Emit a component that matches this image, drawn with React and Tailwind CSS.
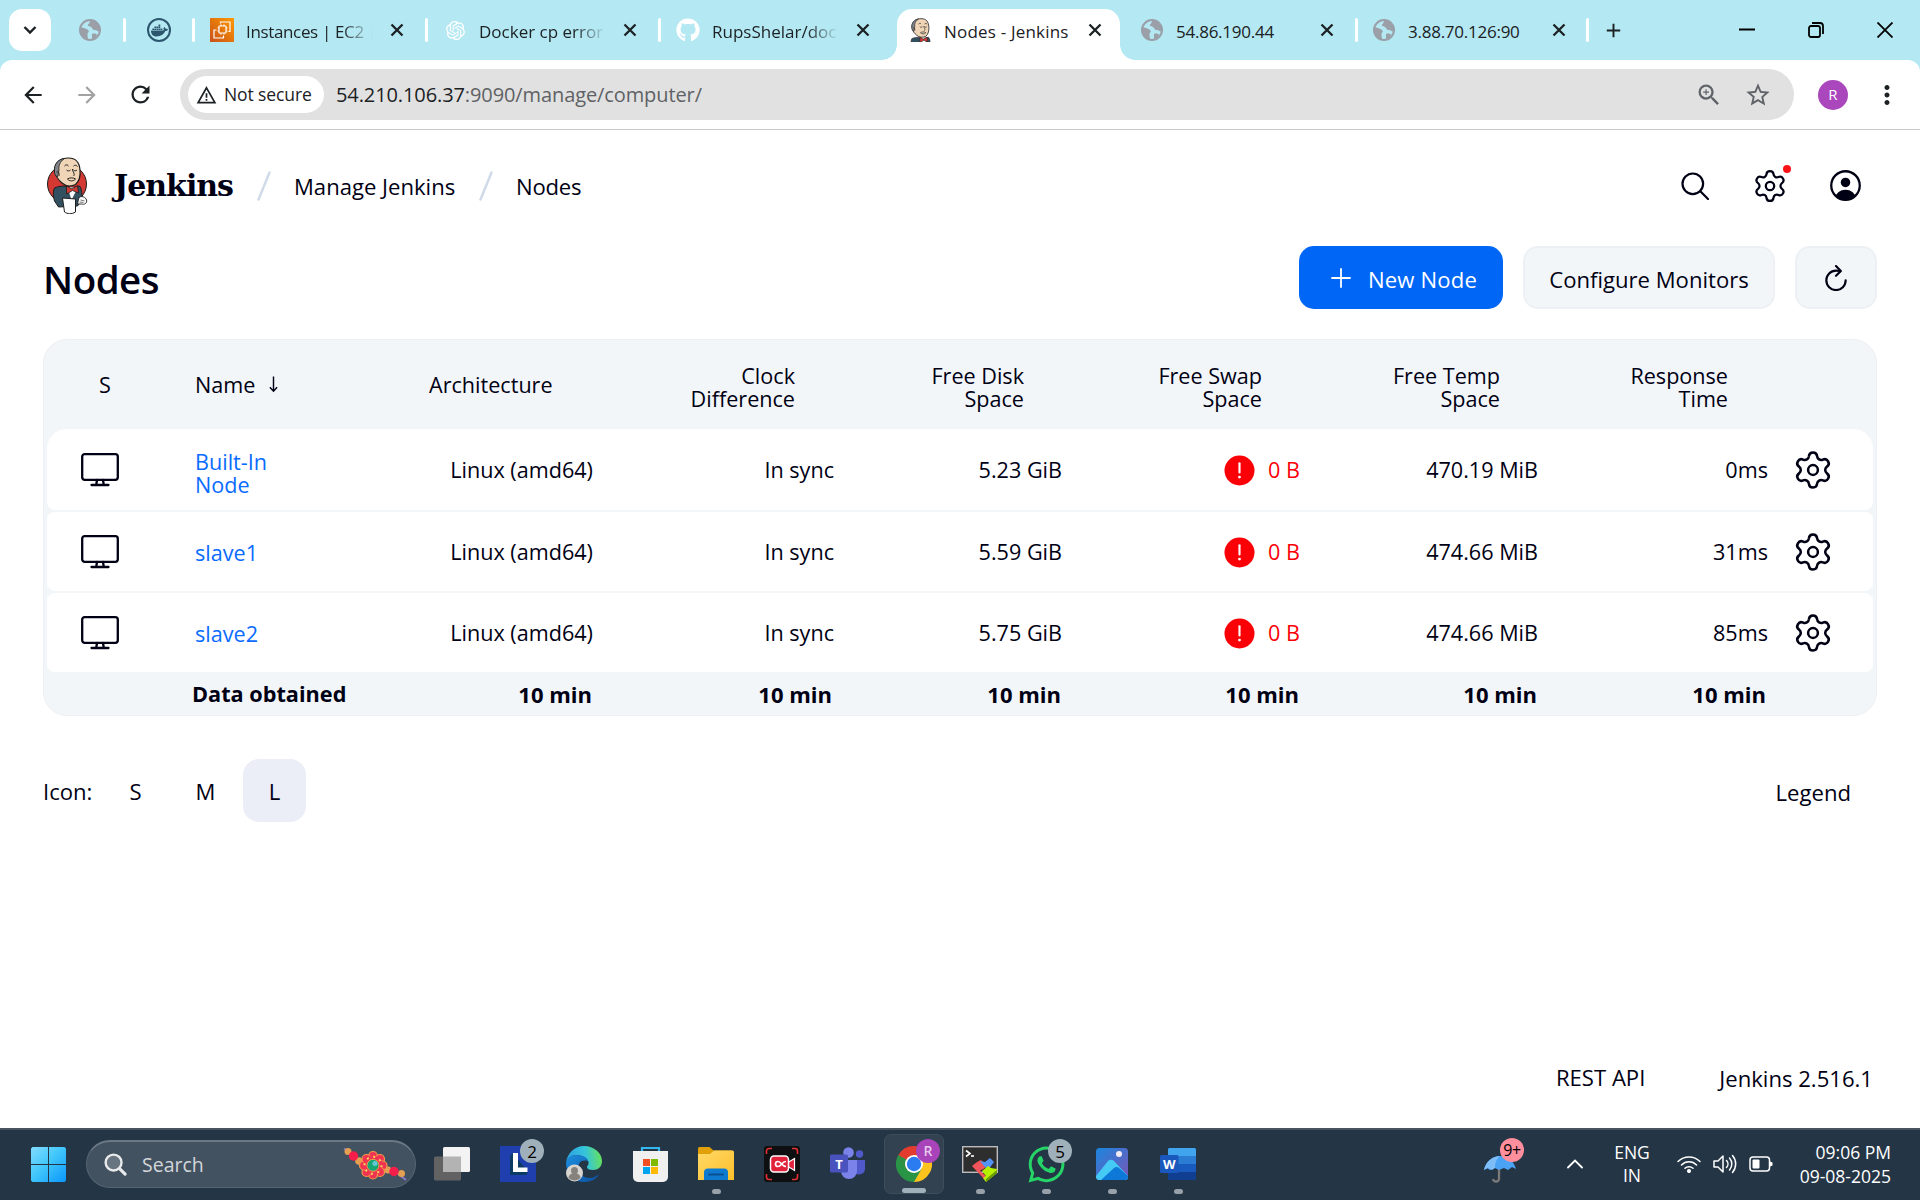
import React from "react";
import { MdArrowBack, MdArrowForward, MdRefresh, MdAdd, MdStarBorder, MdMoreVert, MdZoomIn } from "react-icons/md";
import { FaDocker, FaGithub, FaWhatsapp } from "react-icons/fa";
import { RiOpenaiFill } from "react-icons/ri";

/* ---------- Icons ---------- */

function Globe() {
  return (
    <svg viewBox="0 0 22 22" className="size-[22px]">
      <circle cx="11" cy="11" r="10" fill="#b4e8f2" stroke="#9a9fa8" strokeWidth="2" />
      <path d="M1.5 8 C5 9 8 9.500 9.500 11.500 C10.500 13 8 14 8.500 16 L9 21 C4 20 1 16 1 11 Z" fill="#9a9fa8" />
      <path d="M12 1 C10 3 11 4 9 5.500 C8 7 11 7 12 8 C14 9.500 13 11 16 11 C18 11 18.500 13 20.500 12.500 C21.500 6 17 1.500 12 1Z" fill="#9a9fa8" />
      <path d="M13 15 c2 -1 5 0 5 1 c-1 2 -3 3.500 -5 4 z" fill="#9a9fa8" />
    </svg>
  );
}

function CloseMark({ className }) {
  return (
    <svg viewBox="0 0 20 20" className={className}>
      <path d="M4.500 4.500l11 11M15.500 4.500l-11 11" stroke="#1c2124" strokeWidth="2.300" />
    </svg>
  );
}

function DockerBadge() {
  return (
    <span className="flex size-6 items-center justify-center rounded-full border-2 border-[#2c566e]">
      <FaDocker className="size-[17px] text-[#2c566e]" />
    </span>
  );
}

function Ec2() {
  return (
    <svg viewBox="0 0 24 24" className="size-6">
      <defs>
        <linearGradient id="ec2" x1="0" y1="1" x2="1" y2="0">
          <stop offset="0" stopColor="#c8511b" />
          <stop offset="1" stopColor="#ff9900" />
        </linearGradient>
      </defs>
      <rect width="24" height="24" fill="url(#ec2)" />
      <g fill="none" stroke="#fff" strokeWidth="1.200">
        <rect x="9" y="8" width="7" height="7" rx="0.500" />
        <path d="M11 6.500v1.500M14 6.500v1.500M11 15v1.500M14 15v1.500M7.500 10h1.500M7.500 13h1.500M16 10h1.500M16 13h1.500" />
        <path d="M10.500 5.500V4H20v9.500h-1.500M6.500 12H4v8h9.500v-2.500" />
      </g>
    </svg>
  );
}

function Butler({ className, viewBox = "0 0 41 57", portrait }) {
  return (
    <svg viewBox={viewBox} className={className}>
      {!portrait && <ellipse cx="20.500" cy="27" rx="19.500" ry="19" fill="#d33833" stroke="#1d1d1d" strokeWidth="1" />}
      <path d="M8 31 C13 29 18 28 24 31 L33 29 C36 32 35 39 36 42 L31 49 L12 50 L8 44 C7 40 6 35 8 31Z" fill="#335061" stroke="#1d1d1d" strokeWidth="1" />
      <path d="M21 30 L25 43 L31 31Z" fill="#fff" />
      <path d="M8 14 C8 5 14 1 22 1 C30 1 33 6 33.500 13 C34 18 33 24 29 27.500 C24 30 19 29 15.500 26 C12 23 9 20 8 14Z" fill="#f0d6b7" stroke="#1d1d1d" strokeWidth="1.200" />
      <path d="M8 15 C7 6 13 2 18 1.500 C13 5 12 9 12.500 13 L11 20 C9 19 8 17 8 15Z" fill="#81858a" stroke="#1d1d1d" strokeWidth="0.800" />
      <path d="M10 15c2-1 3 1 2.500 4" fill="none" stroke="#1d1d1d" strokeWidth="0.900" />
      <path d="M18 9c1-1.500 3-1.500 4 0M27 9c1-1 3-1 4 .5M20 13c1 1.200 3 1.200 4 0M27 13c1 1 2.500 1 3.500 0M26 12c0 3 3 5 1 7M21 22c2-1.500 6-1.500 8 0-2 2.500-6 2.500-8 0Z" fill="none" stroke="#1d1d1d" strokeWidth="1" />
      <path d="M20 29 L25.500 32 L31 28.500 L32 36 L26 33.500 L20 37Z" fill="#d33833" stroke="#1d1d1d" strokeWidth="0.800" />
      <path d="M16 41 L29 42 L29 55 C25 57.500 21 57 18 55Z" fill="#fff" stroke="#1d1d1d" strokeWidth="1" />
      <path d="M33 40 C36 39 39 40 40 43 C41 46 38 48 35 47 L31 47 L32 42Z" fill="#fff" stroke="#1d1d1d" strokeWidth="0.900" />
      <path d="M34 43l4 1M33 45l4 .5" stroke="#1d1d1d" strokeWidth="0.600" />
    </svg>
  );
}

function Gear({ className, weight = 1.45 }) {
  return (
    <svg viewBox="0 0 24 24" className={className} fill="none" stroke="#000014" strokeWidth={weight} strokeLinejoin="round">
      <path d="M9.671 4.136a2.340 2.340 0 0 1 4.659 0 2.340 2.340 0 0 0 3.319 1.915 2.340 2.340 0 0 1 2.330 4.033 2.340 2.340 0 0 0 0 3.831 2.340 2.340 0 0 1-2.330 4.033 2.340 2.340 0 0 0-3.319 1.915 2.340 2.340 0 0 1-4.659 0 2.340 2.340 0 0 0-3.320-1.915 2.340 2.340 0 0 1-2.330-4.033 2.340 2.340 0 0 0 0-3.831A2.340 2.340 0 0 1 6.350 6.051a2.340 2.340 0 0 0 3.319-1.915" />
      <circle cx="12" cy="12" r="2.800" />
    </svg>
  );
}

function Computer() {
  return (
    <svg viewBox="0 0 38 34" className="h-[34px] w-[38px]" fill="none" stroke="#000014" strokeWidth="2.300" strokeLinejoin="round" strokeLinecap="round">
      <rect x="1.200" y="1.200" width="35.600" height="25.600" rx="2.500" />
      <path d="M16 27l-.8 5M22 27l.8 5M10.500 32h17" />
    </svg>
  );
}

function Alert() {
  return (
    <svg viewBox="0 0 32 32" className="size-[31px]">
      <circle cx="16" cy="16" r="15.500" fill="#fb0007" />
      <path d="M16 8.500v9.500" stroke="#fff" strokeWidth="2.200" strokeLinecap="round" />
      <circle cx="16" cy="22.800" r="1.500" fill="#fff" />
    </svg>
  );
}

/* ---------- Browser chrome ---------- */

const Divider = () => <span className="h-6 w-[3px] shrink-0 rounded-full bg-white" />;

function Tab({ width, icon, label, text = "tracking-normal", fade, pad = "pl-[15px]" }) {
  return (
    <div className={`flex h-[51px] shrink-0 items-center ${width} ${pad}`}>
      <span className="flex size-6 shrink-0 items-center justify-center">{icon}</span>
      <span
        className={`mt-[3px] ml-3 w-[127px] shrink-0 overflow-hidden text-[17px] leading-6 whitespace-nowrap text-[#1c2124] ${text} ${
          fade ? "[mask-image:linear-gradient(to_right,black_75%,transparent)]" : ""
        }`}
      >
        {label}
      </span>
      <CloseMark className="ml-3.5 size-5" />
    </div>
  );
}

function TabStrip() {
  return (
    <div className="flex h-[60px] items-end bg-[#b4e8f2]">
      <div className="flex h-[51px] w-full items-start">
        <div className="ml-[9px] flex h-[42px] w-[42px] shrink-0 items-center justify-center rounded-[13px] bg-white">
          <svg viewBox="0 0 14 10" className="h-2.5 w-3.5"><path d="M1.500 2l5.500 5.500L12.500 2" fill="none" stroke="#1c2124" strokeWidth="2.400" /></svg>
        </div>
        <div className="flex h-[42px] items-center">
          <span className="flex w-[72px] justify-center pl-1.5"><Globe /></span>
          <Divider />
          <span className="flex w-[66px] justify-center"><DockerBadge /></span>
          <Divider />
          <Tab width="w-[230px]" icon={<Ec2 />} label="Instances | EC2 |" text="tracking-[-0.35px]" fade />
          <Divider />
          <Tab width="w-[230px]" icon={<RiOpenaiFill className="size-[23px] text-white" />} label="Docker cp error" fade />
          <Divider />
          <Tab width="w-[236px]" icon={<FaGithub className="size-6 text-white" />} label="RupsShelar/doc" fade />
        </div>
        <div className="relative flex h-[51px] w-[223px] shrink-0 items-start rounded-t-[15px] bg-white">
          <span className="absolute bottom-0 -left-[15px] size-[15px] bg-[radial-gradient(circle_at_0_0,transparent_14.5px,white_15px)]" />
          <span className="absolute -right-[15px] bottom-0 size-[15px] bg-[radial-gradient(circle_at_100%_0,transparent_14.5px,white_15px)]" />
          <div className="flex h-[42px] items-center">
            <Tab width="w-[223px]" pad="pl-[11px]" icon={<Butler className="h-6 w-[23px]" viewBox="6 0 30 36" portrait />} label="Nodes - Jenkins" text="tracking-[0.2px]" />
          </div>
        </div>
        <div className="flex h-[42px] items-center">
          <Tab width="w-[235px]" pad="pl-[20px]" icon={<Globe />} label="54.86.190.44" text="tracking-[-0.25px]" />
          <Divider />
          <Tab width="w-[228px]" pad="pl-3.5" icon={<Globe />} label="3.88.70.126:90" text="tracking-[-0.25px]" />
          <Divider />
          <MdAdd className="ml-[13px] size-[23px] text-[#1c2124]" />
        </div>
        <div className="ml-auto flex h-[42px] items-center pr-[27px] text-black">
          <svg viewBox="0 0 16 16" className="size-4"><path d="M0 7.500h16" stroke="currentColor" strokeWidth="2" /></svg>
          <svg viewBox="0 0 16 16" className="ml-[53px] size-4" fill="none" stroke="currentColor" strokeWidth="1.800">
            <rect x="1" y="4" width="11" height="11" rx="2" />
            <path d="M4 1h8a3 3 0 0 1 3 3v8" />
          </svg>
          <svg viewBox="0 0 16 16" className="ml-[53px] size-4"><path d="M.5.5l15 15M15.500.5l-15 15" stroke="currentColor" strokeWidth="1.800" /></svg>
        </div>
      </div>
    </div>
  );
}

function Toolbar() {
  return (
    <div className="bg-[#b4e8f2]">
      <div className="flex h-[70px] items-center rounded-t-[12px] border-b border-[#c9c9c9] bg-white">
        <MdArrowBack className="ml-5 size-[26px] text-[#1c2124]" />
        <MdArrowForward className="ml-7 size-[26px] text-[#a2a2a2]" />
        <MdRefresh className="ml-[27px] size-[27px] text-[#1c2124]" />
        <div className="ml-[26px] flex h-[51px] w-[1614px] items-center rounded-full bg-[#e1e1e1] pl-2">
          <div className="flex h-[37px] w-[136px] items-center rounded-full bg-white pl-2">
            <svg viewBox="0 0 22 20" className="h-[18px] w-[21px]" fill="none" stroke="#1c2124" strokeWidth="1.900">
              <path d="M11 2 L20.300 18.500 H1.700Z" />
              <path d="M11 8v5M11 14.500v2" />
            </svg>
            <span className="ml-[7px] text-[17.500px] font-medium tracking-[-0.1px] text-[#1c2124]">Not secure</span>
          </div>
          <span className="ml-3 text-[20px] leading-6 tracking-[-0.1px] text-[#5f6265]">
            <span className="text-[#1c2124]">54.210.106.37</span>:9090/manage/computer/
          </span>
          <MdZoomIn className="ml-auto size-[28px] text-[#5f6368]" />
          <MdStarBorder className="mr-[22px] ml-[21px] size-[28px] text-[#5f6368]" />
        </div>
        <span className="ml-6 flex size-[30px] items-center justify-center rounded-full bg-[#ab47bc] text-[15px] text-white">R</span>
        <MdMoreVert className="ml-6 size-[30px] text-[#1c2124]" />
      </div>
    </div>
  );
}

/* ---------- Jenkins page ---------- */

const Slash = () => (
  <svg viewBox="0 0 14 30" className="h-[30px] w-3.5"><path d="M12.500 1.500L1.500 28.500" stroke="#d0dae8" strokeWidth="2.500" strokeLinecap="round" /></svg>
);

function Header() {
  return (
    <header className="flex h-[111px] items-center pl-[46px]">
      <Butler className="h-[57px] w-[42px]" />
      <span className="ml-[26px] w-[121px] font-['DejaVu_Serif','Liberation_Serif',serif] text-[30px] leading-8 font-bold tracking-[-1px]">Jenkins</span>
      <span className="ml-[22px]"><Slash /></span>
      <span className="mt-px ml-[23px] w-[163px] whitespace-nowrap">Manage Jenkins</span>
      <span className="ml-[22px]"><Slash /></span>
      <span className="mt-px ml-[23px] tracking-[-0.2px]">Nodes</span>
      <div className="ml-auto flex items-center pr-[59px]">
        <svg viewBox="0 0 28 28" className="size-7" fill="none" stroke="#000014" strokeWidth="2.200" strokeLinecap="round">
          <circle cx="11.800" cy="11.800" r="10.300" />
          <path d="M19.300 19.300L27 27" />
        </svg>
        <div className="relative ml-[43px] flex">
          <Gear className="size-9" weight={1.5} />
          <span className="absolute -top-[3px] -right-[3px] size-2 rounded-full bg-[#fb1217]" />
        </div>
        <svg viewBox="0 0 30 30" className="ml-[42px] size-[31px]">
          <clipPath id="face"><circle cx="15" cy="15" r="14" /></clipPath>
          <circle cx="15" cy="15" r="13.800" fill="none" stroke="#000014" strokeWidth="2.200" />
          <circle cx="15" cy="12" r="4.600" fill="#000014" />
          <ellipse cx="15" cy="26.500" rx="9.500" ry="7.500" fill="#000014" clipPath="url(#face)" />
        </svg>
      </div>
    </header>
  );
}

function Actions() {
  return (
    <div className="flex h-[63px] items-center justify-between">
      <h1 className="pt-0.5 text-[38.500px] leading-[50px] font-semibold tracking-[-0.5px]">Nodes</h1>
      <div className="flex gap-5">
        <button className="flex h-[63px] w-[204px] items-center rounded-[15px] bg-[#0066f5] pl-8 text-white">
          <svg viewBox="0 0 20 20" className="size-5"><path d="M10 1v18M1 10h18" stroke="currentColor" strokeWidth="1.800" strokeLinecap="round" /></svg>
          <span className="mt-0.5 ml-[17px] tracking-[0.15px] whitespace-nowrap">New Node</span>
        </button>
        <button className="h-[63px] w-[252px] rounded-[15px] border-2 border-[#edf0f4] bg-[#f3f6f9] pt-0.5 whitespace-nowrap">Configure Monitors</button>
        <button className="flex h-[63px] w-[82px] items-center justify-center rounded-[15px] border-2 border-[#edf0f4] bg-[#f3f6f9]">
          <svg viewBox="80 40 352 430" className="h-[26px] w-[22px]" fill="none" stroke="#000014" strokeWidth="36" strokeLinecap="round" strokeLinejoin="round">
            <path d="M320 146s24.360-12-64-12a160 160 0 10160 160" />
            <path d="M256 58l80 80-80 80" />
          </svg>
        </button>
      </div>
    </div>
  );
}

const nodes = [
  { name: "Built-In Node", disk: "5.23 GiB", temp: "470.19 MiB", response: "0ms", shape: "h-[81px] rounded-t-[20px] rounded-b-[8px]", nudge: "pt-[6px]" },
  { name: "slave1", disk: "5.59 GiB", temp: "474.66 MiB", response: "31ms", shape: "h-[79px] rounded-[8px]", nudge: "pt-px" },
  { name: "slave2", disk: "5.75 GiB", temp: "474.66 MiB", response: "85ms", shape: "h-[79px] rounded-[8px]", nudge: "pt-px" },
];

function NodeTable() {
  return (
    <section className="mt-[30px] h-[377px] rounded-[24px] border border-[#edf0f4] bg-[#f3f6f9] px-[3px] text-[21.600px]">
      <div className="grid h-[89px] grid-cols-[148px_234px_125px_241px_229px_238px_238px_228px] items-center text-right leading-[23px]">
        <span className="pl-[52px] text-left">S</span>
        <span className="flex items-center text-left">
          Name
          <svg viewBox="0 0 10 18" className="ml-[14px] h-[17px] w-[9px]" fill="none" stroke="#000014" strokeWidth="1.600"><path d="M5 0v16M1 12l4 4.500L9 12" /></svg>
        </span>
        <span className="text-left">Architecture</span>
        <span className="pt-1">Clock<br />Difference</span>
        <span className="pt-1">Free Disk<br />Space</span>
        <span className="pt-1">Free Swap<br />Space</span>
        <span className="pt-1">Free Temp<br />Space</span>
        <span className="pt-1">Response<br />Time</span>
      </div>
      <div className="flex flex-col gap-0.5">
        {nodes.map((n) => (
          <div key={n.name} className={`grid grid-cols-[148px_255px_143px_241px_228px_238px_238px_230px_105px] items-center bg-white text-right leading-[23px] whitespace-nowrap ${n.shape}`}>
            <span className="flex pl-[34px]"><Computer /></span>
            <a className={`w-[90px] text-left whitespace-normal text-[#0a6cff] ${n.nudge}`}>{n.name}</a>
            <span>Linux (amd64)</span>
            <span>In sync</span>
            <span>{n.disk}</span>
            <span className="flex items-center justify-end gap-[13px] text-[#fb0007]">
              <span className="pt-px"><Alert /></span>
              0 B
            </span>
            <span>{n.temp}</span>
            <span>{n.response}</span>
            <span className="flex pl-[24px]"><Gear className="size-[42px]" /></span>
          </div>
        ))}
      </div>
      <div className="grid h-[43px] grid-cols-[145px_201px_199px_240px_229px_238px_238px_229px] items-center text-right font-bold">
        <span />
        <span className="text-left text-[21.700px]">Data obtained</span>
        <span className="text-[22px]">10 min</span>
        <span className="text-[22px]">10 min</span>
        <span className="text-[22px]">10 min</span>
        <span className="text-[22px]">10 min</span>
        <span className="text-[22px]">10 min</span>
        <span className="text-[22px]">10 min</span>
      </div>
    </section>
  );
}

function SizePicker() {
  return (
    <div className="mt-[43px] flex h-[63px] items-center">
      <span className="w-[61px]">Icon:</span>
      <span className="w-[63px] text-center">S</span>
      <span className="ml-[7px] w-[63px] text-center">M</span>
      <span className="ml-1.5 flex h-[63px] w-[63px] items-center justify-center rounded-[16px] bg-[#ebeef6]">L</span>
      <span className="mt-0.5 ml-auto pr-[26px]">Legend</span>
    </div>
  );
}

/* ---------- Taskbar ---------- */

const Rakhi = () => (
  <svg viewBox="0 0 64 34" className="h-[34px] w-16">
    <path d="M1 1.500L12 9M54 26l9 7" stroke="#8679c9" strokeWidth="2" />
    <g fill="#e3a052"><circle cx="5" cy="4.500" r="3.500" /><circle cx="16" cy="14" r="3.800" /><circle cx="45" cy="23" r="3.500" /><circle cx="58.500" cy="26.500" r="3.500" /></g>
    <g fill="#f51e4b"><circle cx="10.500" cy="9" r="4.700" /><circle cx="51" cy="24.500" r="4.700" /></g>
    <g fill="#ef3350" stroke="#f29a4c" strokeWidth="1.200">
      <circle cx="30" cy="9" r="4.500" /><circle cx="37" cy="12" r="4.500" /><circle cx="39.500" cy="18.500" r="4.500" /><circle cx="37" cy="25" r="4.500" />
      <circle cx="30" cy="27.500" r="4.500" /><circle cx="23.500" cy="25" r="4.500" /><circle cx="21" cy="18.500" r="4.500" /><circle cx="23.500" cy="12" r="4.500" />
    </g>
    <circle cx="30" cy="18.300" r="9.500" fill="#ef3350" />
    <circle cx="30" cy="18.300" r="8.500" fill="none" stroke="#f9d45c" strokeWidth="2" strokeDasharray="2 4.670" />
    <circle cx="30" cy="18.300" r="6" fill="#17a673" stroke="#f29a4c" strokeWidth="1" />
    <circle cx="32" cy="16.500" r="2.500" fill="#5fc8d8" />
  </svg>
);

const WindowsLogo = () => (
  <svg viewBox="0 0 35 35" className="size-[35px]">
    <defs><linearGradient id="win" x1="0" y1="0" x2="1" y2="1"><stop offset="0" stopColor="#83dcff" /><stop offset="0.450" stopColor="#43c8fb" /><stop offset="1" stopColor="#0a96fb" /></linearGradient></defs>
    <path d="M1.500 0H17v17H0V1.500zM18 0h15.500L35 1.500V17H18zM0 18h17v17H1.500L0 33.500zM18 18h17v15.500L33.500 35H18z" fill="url(#win)" />
  </svg>
);

const TaskView = () => (
  <svg viewBox="0 0 36 34" className="h-[34px] w-9">
    <rect x="0" y="9.500" width="27" height="24" rx="1.500" fill="#626262" />
    <rect x="9" y="0" width="27" height="25" rx="1.500" fill="#f3f3f3" />
    <rect x="9" y="9.500" width="18" height="15.500" fill="#b3b3b3" />
  </svg>
);

const LetterTile = () => (
  <svg viewBox="0 0 36 36" className="size-9">
    <rect width="36" height="36" fill="#1f3fae" />
    <path d="M13 7l-3 3v19h16l2-3z" fill="#0b3b63" />
    <path d="M13 7h5v14.500h9.500V26H13z" fill="#fff" />
  </svg>
);

const Edge = () => (
  <svg viewBox="0 0 36 36" className="size-9">
    <defs>
      <linearGradient id="eg1" x1="0" y1="0.500" x2="1" y2="0.400"><stop offset="0" stopColor="#2a9fe0" /><stop offset="0.550" stopColor="#36c4dc" /><stop offset="1" stopColor="#66e258" /></linearGradient>
      <linearGradient id="eg2" x1="0" y1="0" x2="1" y2="1"><stop offset="0" stopColor="#1d8fe0" /><stop offset="1" stopColor="#0b4f9e" /></linearGradient>
    </defs>
    <path d="M0 17C1 7 9 0 18 0c10 0 18 7 18 15 0 6-4 9-9 9-4 0-6-1-6-3 0-1 2-2 1.500-5C21 11 15 9 10 9 5 9 1 13 0 17z" fill="url(#eg1)" />
    <path d="M0 17c1-5 5-8 10-8 7 0 12 3 12.500 7-2-2-7-2-9 1-3 5 0 12 5 14 6 2.500 11 0 15-3-3 5-8.500 8-15.500 8C8 36 0 28 0 17z" fill="url(#eg2)" />
    <circle cx="8.500" cy="27" r="8.500" fill="#d8d5d0" />
    <circle cx="8.500" cy="24.500" r="3.500" fill="#85817c" />
    <path d="M2.500 32a6 5 0 0 1 12 0 8.500 8.500 0 0 1-12 0z" fill="#85817c" />
  </svg>
);

const Store = () => (
  <svg viewBox="0 0 35 36" className="h-9 w-[35px]">
    <path d="M9 7V2h17v5" fill="none" stroke="#35b8f1" strokeWidth="2.200" />
    <path d="M0 5h35v26a5 5 0 0 1-5 5H5a5 5 0 0 1-5-5z" fill="#f0f0f0" />
    <path d="M10 13h7v7h-7z" fill="#f25022" /><path d="M18 13h7v7h-7z" fill="#7fba00" /><path d="M10 21h7v7h-7z" fill="#00a4ef" /><path d="M18 21h7v7h-7z" fill="#ffb900" />
  </svg>
);

const Folder = () => (
  <svg viewBox="0 0 36 34" className="h-[34px] w-9">
    <defs><linearGradient id="fo" x1="0" y1="0" x2="1" y2="1"><stop offset="0" stopColor="#ffd968" /><stop offset="1" stopColor="#fdbf2a" /></linearGradient></defs>
    <path d="M0 1.500A1.500 1.500 0 0 1 1.500 0h10l4 3.500H34V12H0z" fill="#e0a009" />
    <path d="M0 7h12l4-3.500h18.500A1.500 1.500 0 0 1 36 5v28H0z" fill="url(#fo)" />
    <path d="M6 33V25.500a4 4 0 0 1 4-4h16a4 4 0 0 1 4 4V33z" fill="#0f7bd0" />
    <path d="M11 27.500h14" stroke="#0a4f8f" strokeWidth="1.800" strokeLinecap="round" />
  </svg>
);

const Recorder = () => (
  <svg viewBox="0 0 36 36" className="size-9">
    <rect width="36" height="36" rx="3" fill="#0d0f10" />
    <path d="M2.500 8V5a2.500 2.500 0 0 1 2.500-2.500h3M28 2.500h3A2.500 2.500 0 0 1 33.500 5v3M33.500 28v3a2.500 2.500 0 0 1-2.500 2.500h-3M8 33.500H5A2.500 2.500 0 0 1 2.500 31v-3" fill="none" stroke="#e33035" strokeWidth="1.600" />
    <path d="M24 16.500l6.500-4v12L24 20.500z" fill="#e2213b" stroke="#fff" strokeWidth="1.200" />
    <rect x="6.500" y="10" width="18" height="16" rx="3.500" fill="#e2213b" stroke="#fff" strokeWidth="1.500" />
    <path d="M22 15.500c-4.500 0-4.500 5-8 5a2.500 2.500 0 0 1 0-5c3.500 0 3.500 5 8 5" fill="none" stroke="#fff" strokeWidth="1.700" />
  </svg>
);

const Teams = () => (
  <svg viewBox="0 0 36 34" className="h-[34px] w-9">
    <circle cx="29.500" cy="7" r="3.700" fill="#5059c9" />
    <circle cx="18.500" cy="5.500" r="5.300" fill="#7b83eb" />
    <path d="M25 13h10v9a6 6 0 0 1-10 4z" fill="#5059c9" />
    <path d="M11 13h16v11a8 8 0 0 1-16 0z" fill="#7b83eb" />
    <rect x="0" y="7.500" width="18" height="18" rx="1.500" fill="#4a52bd" />
    <text x="9" y="21.500" textAnchor="middle" fill="#fff" fontFamily="Open Sans" fontWeight="700" fontSize="13">T</text>
  </svg>
);

const Chrome = () => (
  <svg viewBox="0 0 36 36" className="size-9">
    <path d="M18 18L2.410 9A18 18 0 0 1 33.590 9z" fill="#e33b2e" />
    <path d="M18 18L33.590 9A18 18 0 0 1 18 36z" fill="#fcc31e" />
    <path d="M18 18L18 36A18 18 0 0 1 2.410 9z" fill="#2a9446" />
    <path d="M18 9h15.590A18 18 0 0 1 36 18H18z" fill="#fcc31e" />
    <path d="M2.410 9L10.200 22.500 18 18V9z" fill="#e33b2e" />
    <path d="M2.410 9L10.200 22.500 18 18z" fill="#2a9446" />
    <path d="M18 36L25.800 22.500 18 18z" fill="#fcc31e" />
    <path d="M10.200 22.500L18 27l7.800-4.500L18 36z" fill="#2a9446" />
    <circle cx="18" cy="18" r="9" fill="#fff" /><circle cx="18" cy="18" r="7.200" fill="#2b7cf0" />
  </svg>
);

const Terminal = () => (
  <svg viewBox="0 0 36 36" className="size-9">
    <rect x="0.700" y="0.700" width="34.600" height="25.600" fill="#2e2e2e" stroke="#bcbcbc" strokeWidth="1.400" />
    <path d="M4 4.500l4 3-4 3" fill="none" stroke="#fff" strokeWidth="1.600" /><path d="M9 10h3" stroke="#fff" strokeWidth="1.600" />
    <path d="M10 20l5-4 6 6-3 3 6 5-1 4z" fill="#f2555a" />
    <path d="M15 16l4-2 6 6-5 4z" fill="#f2555a" />
    <path d="M18 15l5 1 5-4 4 4-6 8-4-4z" fill="#5393f5" />
    <path d="M20 25l6-5 3 2 6 1v4l-11 9-3-4 3-2z" fill="#b5f000" />
    <path d="M24 33l11-9v3l-11 9z" fill="#6c9a00" />
  </svg>
);

const Photos = () => (
  <svg viewBox="0 0 32 32" className="size-8">
    <defs><linearGradient id="ph" x1="0" y1="0" x2="1" y2="1"><stop offset="0" stopColor="#1b86dd" /><stop offset="1" stopColor="#7a55b8" /></linearGradient><clipPath id="phc"><rect width="32" height="32" rx="3.500" /></clipPath></defs>
    <g clipPath="url(#phc)">
      <rect width="32" height="32" fill="url(#ph)" />
      <path d="M0 28L12 13a4 4 0 0 1 6 0l14 15v4H0z" fill="#45c9f5" />
      <path d="M5 32L18 20a4 4 0 0 1 5 0l9 8v4z" fill="#0d78d8" />
    </g>
    <circle cx="23" cy="6" r="3" fill="#f3ecf5" />
  </svg>
);

const Word = () => (
  <svg viewBox="0 0 36 33" className="h-[33px] w-9">
    <rect x="8" width="28" height="32" rx="1.500" fill="#185abd" />
    <path d="M9.500 0h25A1.500 1.500 0 0 1 36 1.500V8H8V1.500A1.500 1.500 0 0 1 9.500 0z" fill="#41a5ee" />
    <path d="M8 8h28v8H8z" fill="#2b7cd3" /><path d="M8 24h28v6.500a1.500 1.500 0 0 1-1.500 1.500h-25A1.500 1.500 0 0 1 8 30.500z" fill="#103f91" />
    <rect y="7" width="18.500" height="18" rx="1.500" fill="#1a58bd" />
    <text x="9.200" y="20.800" textAnchor="middle" fill="#fff" fontFamily="Open Sans" fontWeight="700" fontSize="13">W</text>
  </svg>
);

const apps = [
  { id: "view", icon: <TaskView /> },
  { id: "tile", icon: <LetterTile />, badge: "2" },
  { id: "edge", icon: <Edge /> },
  { id: "store", icon: <Store /> },
  { id: "files", icon: <Folder />, open: true },
  { id: "recorder", icon: <Recorder /> },
  { id: "teams", icon: <Teams /> },
  { id: "chrome", icon: <Chrome />, active: true, badge: "R" },
  { id: "terminal", icon: <Terminal />, open: true },
  { id: "whatsapp", icon: <FaWhatsapp className="size-[41px] text-[#25d366]" />, open: true, badge: "5" },
  { id: "photos", icon: <Photos />, open: true },
  { id: "word", icon: <Word />, open: true },
];

function Taskbar() {
  return (
    <footer className="flex h-[72px] shrink-0 items-center border-t-2 border-[#47545f] bg-[#243546] pb-0.5 text-white">
      <span className="ml-[31px] w-[55px]"><WindowsLogo /></span>
      <div className="flex h-12 w-[330px] items-center rounded-full border border-t-2 border-[#566471] border-t-[#6c7883] bg-[#435260] pl-[17px]">
        <svg viewBox="0 0 24 24" className="size-[23px]" fill="none" stroke="#e8eaec" strokeWidth="2.500" strokeLinecap="round"><circle cx="10" cy="10" r="8.300" fill="#68747f" /><path d="M16.500 16.500L22 22" strokeWidth="3.200" /></svg>
        <span className="ml-[15px] text-[19.500px] text-[#d3d7db]">Search</span>
        <span className="mr-2 ml-auto -translate-y-px"><Rakhi /></span>
      </div>
      <div className="ml-[3px] flex">
        {apps.map((a) => (
          <div key={a.id} className="flex w-[66px] justify-center">
            <div className={`relative flex h-[60px] w-[60px] items-center justify-center rounded-[7px] ${a.active ? "border border-[#3e4d5b] bg-[#324250]" : ""}`}>
              {a.icon}
              {a.badge && (
                <span
                  className={`absolute flex size-6 items-center justify-center rounded-full leading-none ${
                    a.active ? "top-1 right-[3px] bg-[#a843b9] text-[14px] font-semibold text-[#e6c9eb]" : "top-[5px] right-1 bg-[#a0b0ba] text-[17px] text-black"
                  }`}
                >
                  {a.badge}
                </span>
              )}
              {a.open && <span className="absolute bottom-0 h-[5px] w-[9px] rounded-full bg-[#98a1a9]" />}
              {a.active && <span className="absolute bottom-0 h-[5px] w-6 rounded-full bg-[#a0b0ba]" />}
            </div>
          </div>
        ))}
      </div>
      <div className="ml-auto flex items-center pr-[29px]">
        <div className="relative">
          <svg viewBox="0 0 34 30" className="mt-3 h-[30px] w-[34px]">
            <path d="M15 3v20a3 3 0 0 1-6 1" fill="none" stroke="#7c7a78" strokeWidth="2.300" />
            <path d="M0 15C2 6 9 1 16 1s14 5 16 13l-4-2-4 3-4-2-5 2-4-2-5 2-3-2z" fill="#4ba3f5" />
            <path d="M0 15C2 6 9 1 16 1c-4 3-5 8-5 12l-3 2-4-2z" fill="#7dbdf8" />
          </svg>
          <span className="absolute top-[-5px] left-4 flex size-6 items-center justify-center rounded-full bg-[#ff8f9c] text-[16px] leading-none tracking-[-0.5px] text-black">9+</span>
        </div>
        <svg viewBox="0 0 16 10" className="ml-[49px] h-2.5 w-4"><path d="M1 8.500l7-7 7 7" fill="none" stroke="currentColor" strokeWidth="1.800" strokeLinecap="round" /></svg>
        <span className="ml-[31px] w-9 text-center text-[17.500px] leading-[23px]">ENG<br />IN</span>
        <svg viewBox="0 0 24 18" className="ml-[27px] h-[18px] w-6" fill="none" stroke="currentColor" strokeWidth="1.500" strokeLinecap="round">
          <path d="M1 6.500a15.500 15.500 0 0 1 22 0M4.500 10a10.500 10.500 0 0 1 15 0M8 13.300a5.700 5.700 0 0 1 8 0" /><circle cx="12" cy="16" r="1.300" fill="currentColor" />
        </svg>
        <svg viewBox="0 0 24 20" className="ml-3 h-5 w-6" fill="none" stroke="currentColor" strokeWidth="1.500" strokeLinejoin="round" strokeLinecap="round">
          <path d="M1 7h4l5-5v16l-5-5H1zM13.500 6.500a5 5 0 0 1 0 7M16.500 4a9 9 0 0 1 0 12M19.500 1.500a13 13 0 0 1 0 17" />
        </svg>
        <svg viewBox="0 0 24 16" className="ml-3 h-4 w-6" fill="none" stroke="currentColor" strokeWidth="1.500">
          <rect x="1" y="1" width="19.500" height="14" rx="3" /><rect x="3.500" y="3.500" width="7" height="9" rx="1" fill="currentColor" stroke="none" /><path d="M21 5.500l2.500 1v3l-2.500 1z" fill="currentColor" stroke="none" />
        </svg>
        <span className="ml-[18px] w-[100px] text-right text-[17.500px] leading-6 whitespace-nowrap">09:06 PM<br />09-08-2025</span>
      </div>
    </footer>
  );
}

export default function App() {
  return (
    <div className="flex h-[1200px] w-[1920px] flex-col overflow-hidden bg-white font-['Open_Sans','Noto_Sans',sans-serif]">
      <TabStrip />
      <Toolbar />
      <main className="flex flex-1 flex-col text-[22.100px] leading-[28px] text-[#000014]">
        <Header />
        <div className="mt-[5px] px-[43px]">
          <Actions />
          <NodeTable />
          <SizePicker />
        </div>
        <div className="mt-auto mb-9 flex justify-end gap-[74px] pr-[47px]">
          <span className="-mt-px">REST API</span>
          <span>Jenkins 2.516.1</span>
        </div>
      </main>
      <Taskbar />
    </div>
  );
}
